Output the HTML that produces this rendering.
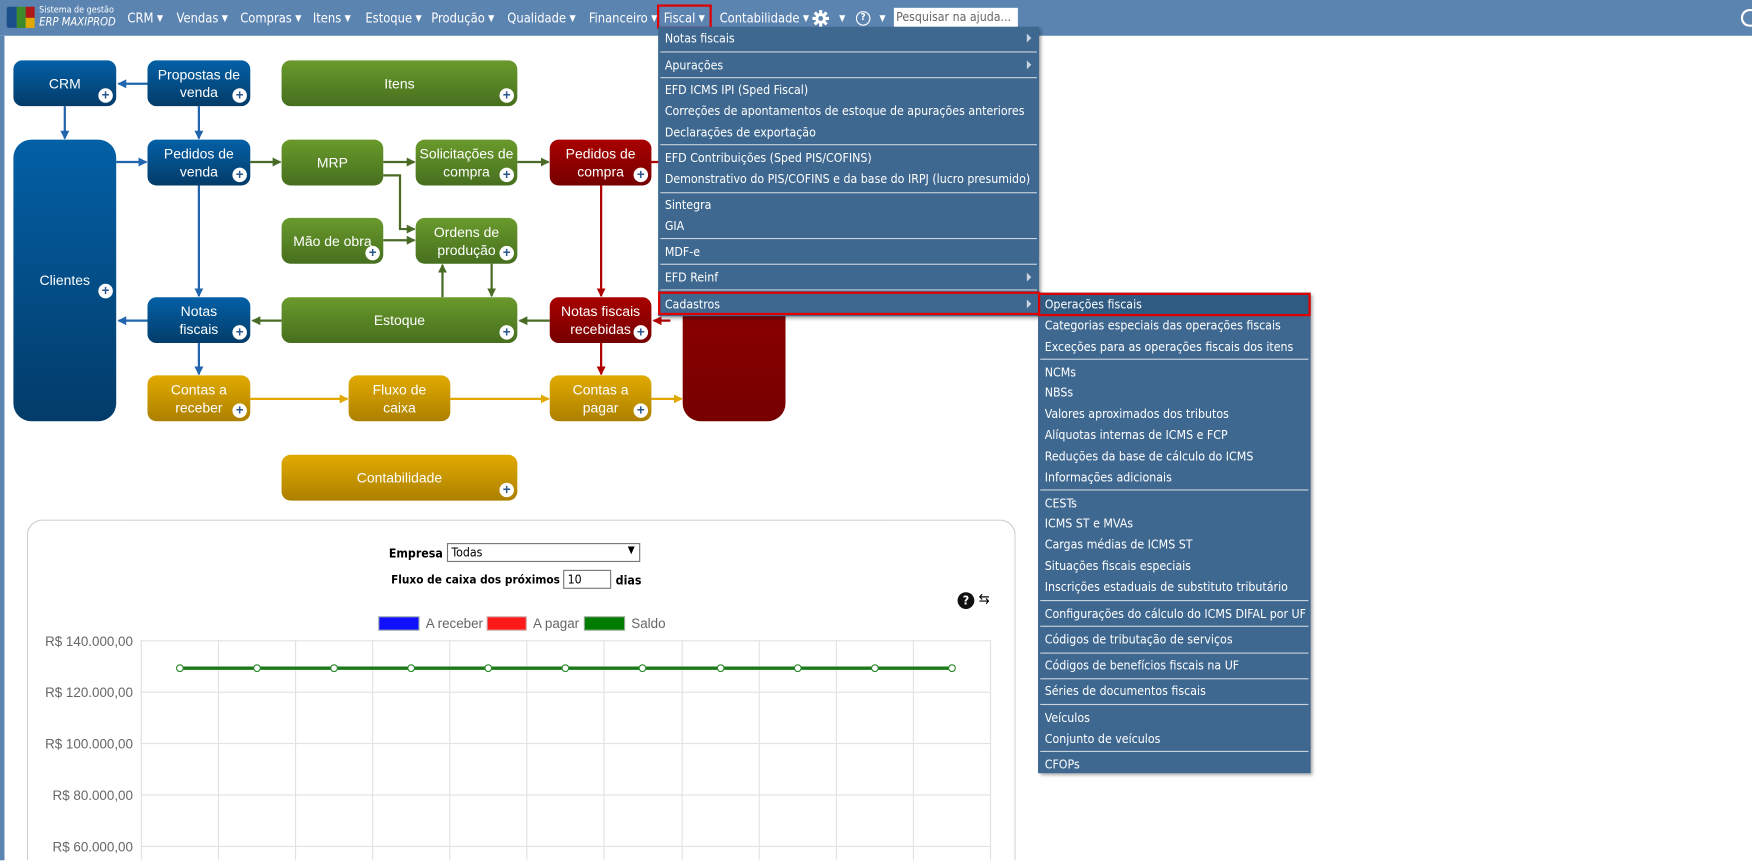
<!DOCTYPE html>
<html style="overflow:hidden;width:1752px;height:861px"><head><meta charset="utf-8"><style>
*{margin:0;padding:0;box-sizing:border-box}
body{width:1752px;height:861px;overflow:hidden;background:#fff;font-family:"DejaVu Sans Condensed","Liberation Sans",sans-serif;position:relative}
#s{position:absolute;left:0;top:0;width:1568px;height:770px;overflow:hidden;transform:scale(1.11735);transform-origin:0 0}
#top{position:absolute;left:0;top:0;width:1568px;height:32px;background:#5c84b1}
#lft{position:absolute;left:0;top:32px;width:4px;height:738px;background:#5c84b1}
.nav{position:absolute;top:9px;color:#fff;font-size:11.5px;white-space:nowrap}
.tri{font-size:8px;margin-left:3px;vertical-align:1px}
.b{position:absolute;color:#fff;font-family:"Liberation Sans",sans-serif;font-size:12.5px;text-align:center;border-radius:8px;display:flex;align-items:center;justify-content:center;line-height:16px}
.bl{background:linear-gradient(#0360a6,#033c69)}
.gr{background:linear-gradient(#6a9a2c,#466f1e)}
.rd{background:linear-gradient(#a80000,#760000)}
.yl{background:linear-gradient(#e1aa00,#ac8000)}
.p{position:absolute;right:3px;bottom:3px;width:13px;height:13px;border-radius:50%;background:#fff;color:#2a5690;font-size:12px;line-height:12px;text-align:center;font-weight:bold}
.menu{position:absolute;background:#3f6890;color:#fff;font-size:11px;box-shadow:2px 2px 3px rgba(0,0,0,.35)}
.mi{position:absolute;left:6px;white-space:nowrap}
.sep{position:absolute;left:2px;right:2px;height:1px;background:#c9d4e0}
.ar{position:absolute;right:7px;width:0;height:0;border-left:4px solid #c9d4e0;border-top:4px solid transparent;border-bottom:4px solid transparent}
.lb{position:absolute;font-size:11px;font-weight:bold;white-space:nowrap}
</style></head><body><div id="s">
<div id="top"></div><div id="lft"></div>
<div style="position:absolute;left:6px;top:6px;width:9px;height:19px;background:#1a4f8c;border-radius:2px 0 0 2px"></div>
<div style="position:absolute;left:15px;top:6px;width:8px;height:19px;background:#3c8a2a"></div>
<div style="position:absolute;left:23px;top:6px;width:8px;height:10px;background:#b01818"></div>
<div style="position:absolute;left:23px;top:16px;width:8px;height:9px;background:#e0a800"></div>
<div style="position:absolute;left:35px;top:4px;color:#fff;font-size:8px">Sistema de gestão</div>
<div style="position:absolute;left:35px;top:15px;color:#fff;font-size:10px;font-style:italic">ERP MAXIPROD</div>
<div class="nav" style="left:114px">CRM<span class="tri">▼</span></div>
<div class="nav" style="left:158px">Vendas<span class="tri">▼</span></div>
<div class="nav" style="left:215px">Compras<span class="tri">▼</span></div>
<div class="nav" style="left:280px">Itens<span class="tri">▼</span></div>
<div class="nav" style="left:327px">Estoque<span class="tri">▼</span></div>
<div class="nav" style="left:386px">Produção<span class="tri">▼</span></div>
<div class="nav" style="left:454px">Qualidade<span class="tri">▼</span></div>
<div class="nav" style="left:527px">Financeiro<span class="tri">▼</span></div>
<div style="position:absolute;left:588px;top:4px;width:49px;height:22px;border:2px solid #e00000"></div>
<div class="nav" style="left:594px">Fiscal<span class="tri">▼</span></div>
<div class="nav" style="left:644px">Contabilidade<span class="tri">▼</span></div>
<svg style="position:absolute;left:727px;top:9px" width="15" height="15" viewBox="0 0 16 16"><g fill="#fff"><circle cx="8" cy="8" r="5"/><rect x="6.5" y="0" width="3" height="16"/><rect x="0" y="6.5" width="16" height="3"/><rect x="6.5" y="0" width="3" height="16" transform="rotate(45 8 8)"/><rect x="6.5" y="0" width="3" height="16" transform="rotate(-45 8 8)"/></g><circle cx="8" cy="8" r="2.3" fill="#5c84b1"/></svg>
<div class="nav" style="left:748px;top:9px"><span class="tri">▼</span></div>
<div style="position:absolute;left:766px;top:10px;width:13px;height:13px;border:1.5px solid #fff;border-radius:50%;color:#fff;font-size:9px;text-align:center;line-height:10px;font-weight:bold">?</div>
<div class="nav" style="left:784px"><span class="tri">▼</span></div>
<div style="position:absolute;left:800px;top:7px;width:111px;height:17px;background:#fff;font-size:11px;color:#666;padding:2px 2px;white-space:nowrap;overflow:hidden">Pesquisar na ajuda...</div>
<div style="position:absolute;left:1558px;top:8px;width:10px;height:16px;border:2px solid #fff;border-right:none;border-radius:8px 0 0 8px"></div>

<svg style="position:absolute;left:0;top:0" width="720" height="460">
<defs>
<marker id="mb" markerWidth="8" markerHeight="8" refX="7" refY="4" orient="auto" markerUnits="userSpaceOnUse"><path d="M0,0L8,4L0,8z" fill="#2065ad"/></marker>
<marker id="mg" markerWidth="8" markerHeight="8" refX="7" refY="4" orient="auto" markerUnits="userSpaceOnUse"><path d="M0,0L8,4L0,8z" fill="#4a6b26"/></marker>
<marker id="mr" markerWidth="8" markerHeight="8" refX="7" refY="4" orient="auto" markerUnits="userSpaceOnUse"><path d="M0,0L8,4L0,8z" fill="#b00000"/></marker>
<marker id="my" markerWidth="8" markerHeight="8" refX="7" refY="4" orient="auto" markerUnits="userSpaceOnUse"><path d="M0,0L8,4L0,8z" fill="#e0a800"/></marker>
</defs>
<g stroke-width="2" fill="none">
<path d="M132,75H106" stroke="#2065ad" marker-end="url(#mb)"/>
<path d="M58,95V124" stroke="#2065ad" marker-end="url(#mb)"/>
<path d="M178,95V124" stroke="#2065ad" marker-end="url(#mb)"/>
<path d="M104,145H131" stroke="#2065ad" marker-end="url(#mb)"/>
<path d="M178,166V265" stroke="#2065ad" marker-end="url(#mb)"/>
<path d="M132,287H106" stroke="#2065ad" marker-end="url(#mb)"/>
<path d="M178,307V335" stroke="#2065ad" marker-end="url(#mb)"/>
<path d="M224,145H251" stroke="#4a6b26" marker-end="url(#mg)"/>
<path d="M343,145H371" stroke="#4a6b26" marker-end="url(#mg)"/>
<path d="M343,157H358V205H371" stroke="#4a6b26" marker-end="url(#mg)"/>
<path d="M343,215H371" stroke="#4a6b26" marker-end="url(#mg)"/>
<path d="M396,266V237" stroke="#4a6b26" marker-end="url(#mg)"/>
<path d="M440,236V265" stroke="#4a6b26" marker-end="url(#mg)"/>
<path d="M252,287H226" stroke="#4a6b26" marker-end="url(#mg)"/>
<path d="M492,287H465" stroke="#4a6b26" marker-end="url(#mg)"/>
<path d="M463,145H491" stroke="#4a6b26" marker-end="url(#mg)"/>
<path d="M583,145H600" stroke="#b00000"/>
<path d="M538,166V265" stroke="#b00000" marker-end="url(#mr)"/>
<path d="M538,307V335" stroke="#b00000" marker-end="url(#mr)"/>
<path d="M600,287H585" stroke="#b00000" marker-end="url(#mr)"/>
<path d="M224,357H311" stroke="#e0a800" marker-end="url(#my)"/>
<path d="M403,357H491" stroke="#e0a800" marker-end="url(#my)"/>
<path d="M583,357H610" stroke="#e0a800" marker-end="url(#my)"/>
</g></svg>

<div class="b bl" style="left:12px;top:54px;width:92px;height:41px">CRM<div class="p">+</div></div>
<div class="b bl" style="left:132px;top:54px;width:92px;height:41px">Propostas de<br>venda<div class="p">+</div></div>
<div class="b gr" style="left:252px;top:54px;width:211px;height:41px">Itens<div class="p">+</div></div>
<div class="b bl" style="left:12px;top:125px;width:92px;height:252px;border-radius:16px">Clientes<div class="p" style="bottom:110px">+</div></div>
<div class="b bl" style="left:132px;top:125px;width:92px;height:41px">Pedidos de<br>venda<div class="p">+</div></div>
<div class="b gr" style="left:252px;top:125px;width:91px;height:41px">MRP</div>
<div class="b gr" style="left:372px;top:125px;width:91px;height:41px">Solicitações de<br>compra<div class="p">+</div></div>
<div class="b rd" style="left:492px;top:125px;width:91px;height:41px">Pedidos de<br>compra<div class="p">+</div></div>
<div class="b gr" style="left:252px;top:195px;width:91px;height:41px">Mão de obra<div class="p">+</div></div>
<div class="b gr" style="left:372px;top:195px;width:91px;height:41px">Ordens de<br>produção<div class="p">+</div></div>
<div class="b bl" style="left:132px;top:266px;width:92px;height:41px">Notas<br>fiscais<div class="p">+</div></div>
<div class="b gr" style="left:252px;top:266px;width:211px;height:41px">Estoque<div class="p">+</div></div>
<div class="b rd" style="left:492px;top:266px;width:91px;height:41px">Notas fiscais<br>recebidas<div class="p">+</div></div>
<div class="b rd" style="left:611px;top:125px;width:92px;height:252px;border-radius:16px"></div>
<div class="b yl" style="left:132px;top:336px;width:92px;height:41px">Contas a<br>receber<div class="p">+</div></div>
<div class="b yl" style="left:312px;top:336px;width:91px;height:41px">Fluxo de<br>caixa</div>
<div class="b yl" style="left:492px;top:336px;width:91px;height:41px">Contas a<br>pagar<div class="p">+</div></div>
<div class="b yl" style="left:252px;top:407px;width:211px;height:41px">Contabilidade<div class="p">+</div></div>

<div style="position:absolute;left:24px;top:465px;width:885px;height:305px;border:1px solid #ccc;border-bottom:none;border-radius:14px 14px 0 0"></div>
<div class="lb" style="left:348px;top:489px">Empresa</div>
<div style="position:absolute;left:400px;top:486px;width:173px;height:17px;border:1px solid #777;font-size:11px;padding:1px 3px">Todas<span style="position:absolute;right:4px;font-size:9px">▼</span></div>
<div class="lb" style="left:350px;top:513px;font-size:10.5px">Fluxo de caixa dos próximos</div>
<div style="position:absolute;left:504px;top:510px;width:43px;height:17px;border:1px solid #777;font-size:11px;padding:1px 3px">10</div>
<div class="lb" style="left:551px;top:513px">dias</div>
<div style="position:absolute;left:857px;top:530px;width:15px;height:15px;border-radius:50%;background:#111;color:#fff;font-size:11px;text-align:center;line-height:15px;font-weight:bold">?</div>
<div style="position:absolute;left:876px;top:529px;font-size:13px">⇆</div>

<svg style="position:absolute;left:0;top:540px" width="920" height="230" font-family="Liberation Sans, sans-serif" font-size="12" fill="#666">
<rect x="339" y="12" width="36" height="12" fill="#1010ff" stroke="#9aa"/><text x="381" y="22">A receber</text>
<rect x="436" y="12" width="35" height="12" fill="#ff1a1a" stroke="#caa"/><text x="477" y="22">A pagar</text>
<rect x="523" y="12" width="36" height="12" fill="#007c00" stroke="#9a9"/><text x="565" y="22">Saldo</text>
<g stroke="#e2e2e2" stroke-width="1">
<path d="M126,33.5H887M126,79.5H887M126,125.5H887M126,171.5H887M126,217.5H887"/>
<path d="M126.5,33V330M195.5,33V330M264.5,33V330M333.5,33V330M402.5,33V330M471.5,33V330M540.5,33V330M610.5,33V330M679.5,33V330M748.5,33V330M817.5,33V330M886.5,33V330"/>
</g>
<g text-anchor="end"><text x="119" y="38">R$ 140.000,00</text><text x="119" y="84">R$ 120.000,00</text><text x="119" y="130">R$ 100.000,00</text><text x="119" y="176">R$ 80.000,00</text><text x="119" y="222">R$ 60.000,00</text></g>
<path d="M161,58H852" stroke="#1a7a1a" stroke-width="3"/>
<g fill="#fff" stroke="#2a8a2a" stroke-width="1"><circle cx="161" cy="58" r="3"/><circle cx="230" cy="58" r="3"/><circle cx="299" cy="58" r="3"/><circle cx="368" cy="58" r="3"/><circle cx="437" cy="58" r="3"/><circle cx="506" cy="58" r="3"/><circle cx="575" cy="58" r="3"/><circle cx="645" cy="58" r="3"/><circle cx="714" cy="58" r="3"/><circle cx="783" cy="58" r="3"/><circle cx="852" cy="58" r="3"/></g>
</svg>

<div class="menu" style="left:589px;top:24px;width:341px;height:259px">
<div class="mi" style="top:4px">Notas fiscais</div><div class="ar" style="top:6px"></div>
<div class="sep" style="top:22px"></div>
<div class="mi" style="top:28px">Apurações</div><div class="ar" style="top:30px"></div>
<div class="sep" style="top:45px"></div>
<div class="mi" style="top:50px">EFD ICMS IPI (Sped Fiscal)</div>
<div class="mi" style="top:69px">Correções de apontamentos de estoque de apurações anteriores</div>
<div class="mi" style="top:88px">Declarações de exportação</div>
<div class="sep" style="top:105px"></div>
<div class="mi" style="top:111px">EFD Contribuições (Sped PIS/COFINS)</div>
<div class="mi" style="top:130px">Demonstrativo do PIS/COFINS e da base do IRPJ (lucro presumido)</div>
<div class="sep" style="top:148px"></div>
<div class="mi" style="top:153px">Sintegra</div>
<div class="mi" style="top:172px">GIA</div>
<div class="sep" style="top:189px"></div>
<div class="mi" style="top:195px">MDF-e</div>
<div class="sep" style="top:212px"></div>
<div class="mi" style="top:218px">EFD Reinf</div><div class="ar" style="top:220px"></div>
<div class="sep" style="top:235px"></div>
<div class="mi" style="top:242px">Cadastros</div><div class="ar" style="top:244px"></div>
</div>
<div style="position:absolute;left:589px;top:261px;width:342px;height:21px;border:2px solid #e00000"></div>

<div class="menu" style="left:929px;top:262px;width:244px;height:430px">
<div style="position:absolute;left:0;top:0;width:244px;height:20px;background:#2f5a82"></div>
<div class="mi" style="top:4px">Operações fiscais</div>
<div class="mi" style="top:23px">Categorias especiais das operações fiscais</div>
<div class="mi" style="top:42px">Exceções para as operações fiscais dos itens</div>
<div class="sep" style="top:59px"></div>
<div class="mi" style="top:65px">NCMs</div>
<div class="mi" style="top:83px">NBSs</div>
<div class="mi" style="top:102px">Valores aproximados dos tributos</div>
<div class="mi" style="top:121px">Alíquotas internas de ICMS e FCP</div>
<div class="mi" style="top:140px">Reduções da base de cálculo do ICMS</div>
<div class="mi" style="top:159px">Informações adicionais</div>
<div class="sep" style="top:176px"></div>
<div class="mi" style="top:182px">CESTs</div>
<div class="mi" style="top:200px">ICMS ST e MVAs</div>
<div class="mi" style="top:219px">Cargas médias de ICMS ST</div>
<div class="mi" style="top:238px">Situações fiscais especiais</div>
<div class="mi" style="top:257px">Inscrições estaduais de substituto tributário</div>
<div class="sep" style="top:275px"></div>
<div class="mi" style="top:281px">Configurações do cálculo do ICMS DIFAL por UF</div>
<div class="sep" style="top:298px"></div>
<div class="mi" style="top:304px">Códigos de tributação de serviços</div>
<div class="sep" style="top:322px"></div>
<div class="mi" style="top:327px">Códigos de benefícios fiscais na UF</div>
<div class="sep" style="top:345px"></div>
<div class="mi" style="top:350px">Séries de documentos fiscais</div>
<div class="sep" style="top:368px"></div>
<div class="mi" style="top:374px">Veículos</div>
<div class="mi" style="top:393px">Conjunto de veículos</div>
<div class="sep" style="top:410px"></div>
<div class="mi" style="top:416px">CFOPs</div>
</div>
<div style="position:absolute;left:929px;top:262px;width:244px;height:21px;border:2px solid #e00000"></div>
</div></body></html>
